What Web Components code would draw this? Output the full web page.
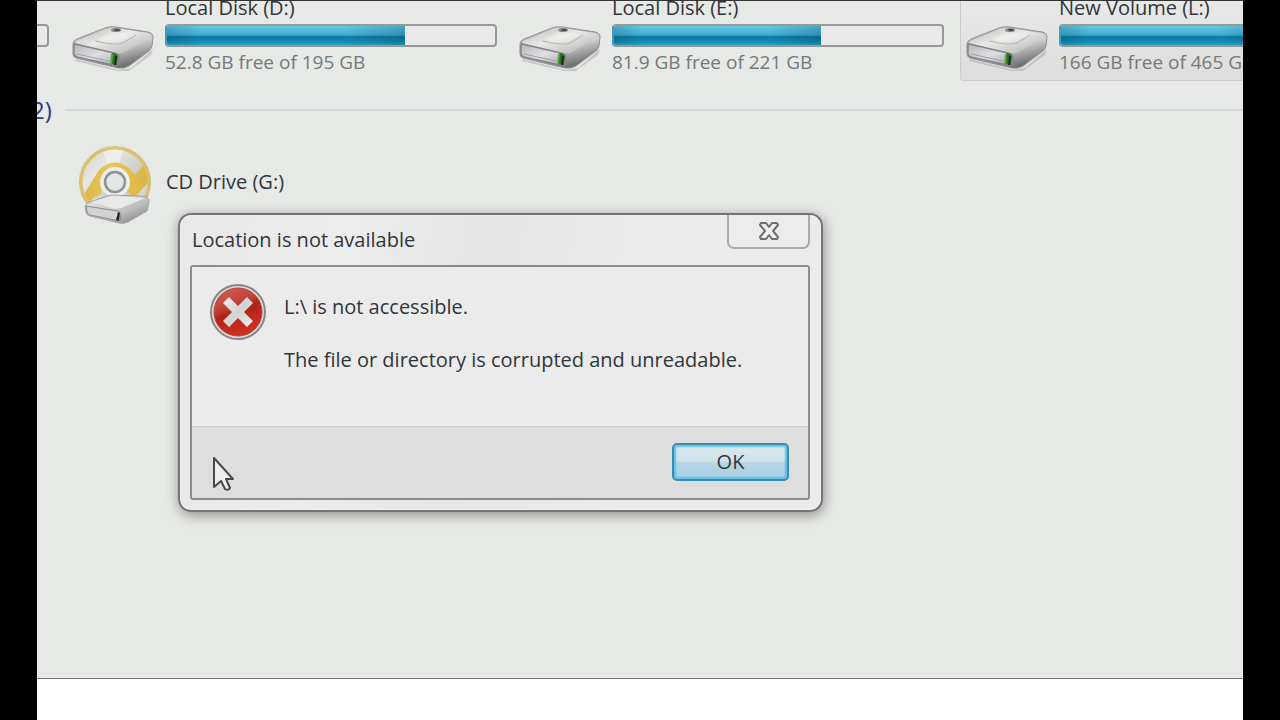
<!DOCTYPE html>
<html lang="en">
<head>
<meta charset="utf-8">
<title>Computer</title>
<style>
  body {
    margin: 0;
    background: #000;
    color: #30363a;
    font: 20px/24px "Open Sans", "Noto Sans", sans-serif;
  }
</style>
</head>
<body>
<explorer-view>
  <drive-row slot="drives">
    <space-meter class="previous" used="0"></space-meter>
    <drive-tile used="72.5">Local Disk (D:)<span slot="space">52.8 GB free of 195 GB</span></drive-tile>
    <drive-tile used="63">Local Disk (E:)<span slot="space">81.9 GB free of 221 GB</span></drive-tile>
    <drive-tile used="64" selected>New Volume (L:)<span slot="space">166 GB free of 465 GB</span></drive-tile>
  </drive-row>
  <group-heading slot="group">2)</group-heading>
  <cd-tile slot="removable">CD Drive (G:)</cd-tile>
  <message-dialog slot="dialog">
    <span slot="title">Location is not available</span>
    <p>L:\ is not accessible.</p>
    <p>The file or directory is corrupted and unreadable.</p>
    <ok-button slot="actions">OK</ok-button>
  </message-dialog>
  <mouse-pointer slot="pointer"></mouse-pointer>
</explorer-view>

<script>
function define(name, html, setup) {
  const template = document.createElement('template');
  template.innerHTML = html;

  customElements.define(name, class extends HTMLElement {
    constructor() {
      super();
      this.attachShadow({ mode: 'open' });
      this.shadowRoot.appendChild(template.content.cloneNode(true));
    }

    connectedCallback() {
      if (setup) {
        setup(this, this.shadowRoot);
      }
    }
  });
}

define('explorer-view', `
  <style>
    :host {
      display: flex;
      flex-direction: column;
      min-height: 100vh;
      margin: 0 37px;
      background: #fff;
    }

    main {
      position: relative;
      flex: 1;
      overflow: hidden;
      box-sizing: border-box;
      margin-bottom: 41px;
      border-top: 1px solid #333;
      border-bottom: 1px solid #777;
      background: #e7e9e6;
    }
  </style>
  <main>
    <slot name="drives"></slot>
    <slot name="group"></slot>
    <slot name="removable"></slot>
    <slot name="dialog"></slot>
    <slot name="pointer"></slot>
  </main>
`);

define('drive-row', `
  <style>
    :host {
      display: flex;
      gap: 7px;
      margin-top: -5px;
    }

    ::slotted(.previous) {
      flex: none;
      width: 26px;
      margin: 28px 10px 0 -14px;
    }
  </style>
  <slot></slot>
`);

define('space-meter', `
  <style>
    :host {
      display: block;
      box-sizing: border-box;
      height: 23px;
      border: 2px solid #979999;
      border-radius: 4px;
      overflow: hidden;
      background: #e8e9e8;
    }

    .fill {
      height: 100%;
      background:
        linear-gradient(transparent 50%, rgba(231, 233, 230, 0) 50%),
        linear-gradient(90deg, rgba(0, 50, 80, .22), transparent 14%, transparent 75%, rgba(0, 50, 80, .24)),
        linear-gradient(#66c8e7, #3dabd1 48%, #0c7ba2 56%, #128bb0 80%, #2ba3c7);
    }

    :host(.filled) {
      border-left-color: #3f9abb;
    }
  </style>
  <div class="fill"></div>
`, (host, root) => {
  const used = Number(host.getAttribute('used'));
  root.querySelector('.fill').style.width = `${used}%`;
  host.classList.toggle('filled', used > 0);
});

define('drive-icon', `
  <style>
    :host {
      display: block;
    }

    svg {
      display: block;
      width: 100%;
    }
  </style>
  <svg viewBox="0 0 84 46" aria-hidden="true">
    <defs>
      <linearGradient id="top" x1="0" y1="0" x2="1" y2="1">
        <stop offset="0" stop-color="#bcbcbb"/>
        <stop offset=".45" stop-color="#e8e8e6"/>
        <stop offset=".7" stop-color="#cfcfce"/>
        <stop offset="1" stop-color="#aaa"/>
      </linearGradient>
      <linearGradient id="side" x1="0" y1="0" x2=".5" y2="1">
        <stop offset="0" stop-color="#dededd"/>
        <stop offset=".4" stop-color="#a3a3a3"/>
        <stop offset=".6" stop-color="#d3d3d2"/>
        <stop offset="1" stop-color="#707172"/>
      </linearGradient>
      <linearGradient id="front" x1="0" y1="0" x2="1" y2="1">
        <stop offset="0" stop-color="#b4b4ba"/>
        <stop offset=".5" stop-color="#dedee3"/>
        <stop offset="1" stop-color="#a6a6ab"/>
      </linearGradient>
    </defs>
    <path d="M5 33 L48 44 L60 42 L82 23 L80 29 L58 45 L46 45 L4 35Z" fill="#999" opacity=".4"/>
    <path d="M2 18 Q2 15 6 13 L34 2 Q39 0 45 1 L77 6 Q82 7 82 11 L81 20 Q81 22 78 25 L58 40 Q53 43 47 42 L5 32 Q2 31 2 28Z" fill="url(#side)" stroke="#929393"/>
    <path d="M5 15 L35 3 Q39 1 45 2 L77 7 Q81 8 77 12 L54 26 Q50 28 45 27 L7 18 Q3 17 5 15Z" fill="url(#top)"/>
    <path d="M24 15 Q45 20 52 17 L65 9" fill="none" stroke="#b4b4b4" stroke-width="1"/>
    <path d="M27 13 L40 6 L65 9 L51 15 Q42 18 27 13Z" fill="#fff" opacity=".25"/>
    <ellipse cx="45" cy="4" rx="5" ry="2" fill="#8a8a8a"/>
    <ellipse cx="46" cy="4" rx="3" ry="1" fill="#444"/>
    <path d="M4 18 L43 27 Q48 28 48 32 L47 38 Q46 41 42 39 L6 31 Q3 30 3 27 L3 20 Q3 18 4 18Z" fill="url(#front)" stroke="#858687" stroke-width="1.5"/>
    <path d="M6 28 L42 36" stroke="#a0a0a5"/>
    <path d="M41 27 Q47 27 47 31 L46 39 L40 38Z" fill="#2d702a"/>
    <path d="M41 28 L40 38" stroke="#5ea845" stroke-width="2"/>
    <path d="M45 30 L44 39" stroke="#1c2c1d" stroke-width="2"/>
  </svg>
`);

define('drive-tile', `
  <style>
    :host {
      display: grid;
      grid-template-columns: 84px 332px;
      column-gap: 10px;
      flex: none;
      box-sizing: border-box;
      width: 440px;
      padding: 0 8px 6px 4px;
      border: solid transparent;
      border-width: 0 1px 1px;
      border-radius: 0 0 4px 4px;
    }

    :host([selected]) {
      border-color: #cbcccb;
      background: linear-gradient(#e9e9e8, #dcdddc);
    }

    drive-icon {
      margin-top: 30px;
    }

    .name,
    .space {
      white-space: nowrap;
    }

    .space {
      color: #747979;
      font-size: 19px;
    }

    space-meter {
      margin: 4px 0 3px;
    }
  </style>
  <drive-icon></drive-icon>
  <div>
    <div class="name"><slot></slot></div>
    <space-meter></space-meter>
    <div class="space"><slot name="space"></slot></div>
  </div>
`, (host, root) => {
  const meter = root.querySelector('space-meter');
  meter.setAttribute('used', host.getAttribute('used'));
  // the meter reads its attribute when it is connected
  meter.replaceWith(meter);
});

define('group-heading', `
  <style>
    :host {
      display: flex;
      align-items: center;
      gap: 13px;
      margin: 14px 0 0 -6px;
      color: #30407c;
      font-size: 24px;
      line-height: 30px;
    }

    .rule {
      flex: 1;
      height: 2px;
      background: #d7d9d8;
    }
  </style>
  <slot></slot>
  <div class="rule"></div>
`);

define('cd-tile', `
  <style>
    :host {
      display: flex;
      align-items: center;
      gap: 13px;
      margin: 19px 0 0 40px;
    }

    svg {
      display: block;
      width: 76px;
      height: 82px;
    }

    .label {
      padding-bottom: 6px;
    }
  </style>
  <svg viewBox="0 0 76 82" aria-hidden="true">
    <defs>
      <linearGradient id="disc" x1="0" y1="0" x2="1" y2="1">
        <stop offset="0" stop-color="#d0d0cb"/>
        <stop offset=".3" stop-color="#e6e7e2"/>
        <stop offset=".6" stop-color="#c9cac6"/>
        <stop offset="1" stop-color="#e6e6e0"/>
      </linearGradient>
      <linearGradient id="gold" x1="0" y1="0" x2="1" y2="0">
        <stop offset="0" stop-color="#dcb545"/>
        <stop offset=".4" stop-color="#e9c65a"/>
        <stop offset="1" stop-color="#d9b23f"/>
      </linearGradient>
      <linearGradient id="case" x1="0" y1="0" x2="1" y2="1">
        <stop offset="0" stop-color="#f0f0ef"/>
        <stop offset=".6" stop-color="#bcbdbd"/>
        <stop offset="1" stop-color="#777"/>
      </linearGradient>
      <clipPath id="round"><circle cx="38" cy="38" r="35"/></clipPath>
    </defs>
    <circle cx="38" cy="38" r="35" fill="url(#disc)" stroke="#cdbf8e" stroke-width="2"/>
    <g clip-path="url(#round)">
      <path d="M38 38 L22 -2 L48 -2Z" fill="#f1f1ec" opacity=".7"/>
      <path d="M3 57 L22 26 Q36 12 52 24 L58 31 L70 17 L78 31 L56 55 L48 44 Q49 26 38 25 Q26 26 25 43 L24 50 L16 54 L9 66Z" fill="url(#gold)"/>
      <circle cx="38" cy="38" r="34" fill="none" stroke="#dfc162" stroke-width="3"/>
    </g>
    <circle cx="38" cy="38" r="15" fill="#eeefed"/>
    <circle cx="38" cy="38" r="10" fill="#e4e6e4" stroke="#8e9293" stroke-width="2.5"/>
    <path d="M8 62 Q9 59 16 57 L34 51 L64 52 Q73 52 72 58 L70 67 L51 78 Q47 80 42 79 L13 72 Q9 71 9 68Z" fill="url(#case)" stroke="#a4a5a5"/>
    <path d="M15 58 L35 52 L68 54 L44 64 Q38 66 31 63Z" fill="#e9e9e8"/>
    <path d="M9 62 L40 67 Q44 68 44 71 L43 77 L13 71 Q10 70 10 67Z" fill="#d3d3d5" stroke="#8b8c8d"/>
    <path d="M41 68 L43 69 L42 77 L39 76Z" fill="#232626"/>
  </svg>
  <span class="label"><slot></slot></span>
`);

define('error-icon', `
  <style>
    :host {
      display: block;
      flex: none;
      width: 58px;
      height: 58px;
    }
  </style>
  <svg viewBox="0 0 58 58" role="img" aria-label="Error">
    <defs>
      <linearGradient id="red" x1="0" y1="0" x2=".4" y2="1">
        <stop offset="0" stop-color="#d0665c"/>
        <stop offset=".45" stop-color="#c13d33"/>
        <stop offset=".58" stop-color="#ae231a"/>
        <stop offset="1" stop-color="#cf2f1c"/>
      </linearGradient>
      <linearGradient id="cross" x1="0" y1="0" x2="1" y2="1">
        <stop offset="0" stop-color="#f4eeee"/>
        <stop offset=".5" stop-color="#d0d3d3"/>
        <stop offset="1" stop-color="#f3eeee"/>
      </linearGradient>
    </defs>
    <circle cx="29" cy="28" r="27" fill="#dedada" stroke="#898585" stroke-width="2"/>
    <circle cx="29" cy="28" r="24" fill="url(#red)" stroke="#b3443d"/>
    <path d="M20 13 L29 22 L38 13 L44 19 L35 28 L44 37 L38 43 L29 34 L20 43 L14 37 L23 28 L14 19Z" fill="url(#cross)"/>
  </svg>
`);

define('close-button', `
  <style>
    :host {
      display: block;
    }

    button {
      display: flex;
      align-items: center;
      justify-content: center;
      box-sizing: border-box;
      width: 83px;
      height: 34px;
      padding: 0;
      border: 2px solid #a9aaaa;
      border-top: 0;
      border-radius: 0 0 7px 7px;
      background: #ececec;
    }
  </style>
  <button type="button" aria-label="Close">
    <svg width="22" height="20" viewBox="0 0 22 20">
      <path d="M3 2 H8 L11 6 L14 2 H19 L20 4 L15 10 L20 16 L19 18 H14 L11 14 L8 18 H3 L2 16 L7 10 L2 4Z" fill="#f0f0f0" stroke="#6d7072" stroke-width="2" stroke-linejoin="round"/>
    </svg>
  </button>
`);

define('ok-button', `
  <style>
    :host {
      display: block;
    }

    button {
      box-sizing: border-box;
      width: 117px;
      height: 38px;
      padding: 0;
      border: 2px solid #3b8caf;
      border-radius: 5px;
      background: linear-gradient(#dce8ed, #d0e3eb 46%, #b6d5e5 54%, #aacfe4);
      box-shadow: inset 0 0 2px 2px #5cc1e4;
      color: inherit;
      font: inherit;
    }
  </style>
  <button type="button"><slot></slot></button>
`);

define('message-dialog', `
  <style>
    :host {
      position: absolute;
      top: 212px;
      left: 141px;
      box-sizing: border-box;
      width: 645px;
      max-width: 100%;
      padding: 0 11px 10px 10px;
      border: 2px solid #737475;
      border-radius: 13px;
      background: linear-gradient(100deg, #e8e8e8, #ececec 25%, #e5e5e5 45%, #ebebeb 70%);
      box-shadow: 1px 3px 13px rgba(0, 0, 0, .4), inset 0 0 0 1px #f0f0f0;
    }

    header {
      display: flex;
      align-items: flex-start;
      justify-content: space-between;
      height: 50px;
    }

    .title {
      padding: 13px 0 0 2px;
    }

    .frame {
      border: 2px solid #8b8c8c;
      border-radius: 3px;
    }

    .message {
      display: flex;
      gap: 17px;
      min-height: 159px;
      box-sizing: border-box;
      padding: 17px;
      background: #ebebeb;
    }

    .text {
      display: flex;
      flex-direction: column;
      gap: 29px;
      padding-top: 11px;
    }

    ::slotted(p) {
      margin: 0;
    }

    footer {
      display: flex;
      justify-content: flex-end;
      padding: 16px 19px 17px;
      border-top: 1px solid #d0d0d0;
      background: #dedede;
    }
  </style>
  <header>
    <div class="title"><slot name="title"></slot></div>
    <close-button></close-button>
  </header>
  <div class="frame">
    <div class="message">
      <error-icon></error-icon>
      <div class="text"><slot></slot></div>
    </div>
    <footer><slot name="actions"></slot></footer>
  </div>
`, (host) => {
  host.setAttribute('role', 'dialog');
});

define('mouse-pointer', `
  <style>
    :host {
      position: absolute;
      top: 455px;
      left: 175px;
      width: 24px;
      height: 36px;
      pointer-events: none;
    }
  </style>
  <svg width="24" height="36" viewBox="0 0 24 36" aria-hidden="true">
    <path d="M2 2 V31 L9 25 L13 33 Q16 35 18 32 L14 23 H21Z" fill="#ededee" stroke="#45494d" stroke-width="2" stroke-linejoin="round"/>
  </svg>
`);
</script>
</body>
</html>
